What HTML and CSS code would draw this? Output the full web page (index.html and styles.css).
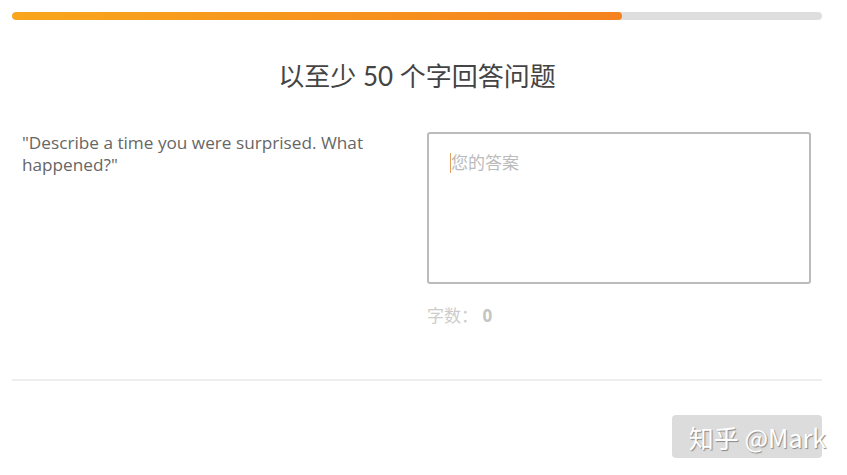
FILE: index.html
```html
<!DOCTYPE html>
<html lang="zh">
<head>
<meta charset="utf-8">
<title>以至少 50 个字回答问题</title>
<link rel="stylesheet" href="styles.css">
</head>
<body>
<div class="page">
  <div class="progress"><div class="progress-fill" style="width: 75.3%"></div></div>
  <h1 class="title">以至少 50 个字回答问题</h1>
  <div class="qa">
    <p class="question">"Describe a time you were surprised. What happened?"</p>
    <div class="answer">
      <div class="textarea"><span class="caret"></span><span class="placeholder">您的答案</span></div>
      <div class="count">字数： <b>0</b></div>
    </div>
  </div>
  <hr class="divider">
  <div class="footer">
    <div class="btn"><span class="watermark">知乎 @Mark</span></div>
  </div>
</div>
</body>
</html>
```

FILE: styles.css
```css
html, body {
  margin: 0;
  padding: 0;
  background: #fff;
}
body {
  font-family: "Open Sans", "Noto Sans CJK SC", sans-serif;
}
.page {
  width: 810px;
  padding: 12px 0 0 12px;
}
.progress {
  height: 8px;
  border-radius: 4px;
  background: #dedede;
  overflow: hidden;
}
.progress-fill {
  height: 100%;
  border-radius: 4px;
  background: linear-gradient(90deg, #f9a61c, #f5821f);
}
.title {
  margin: 39px 0 0;
  height: 34px;
  line-height: 34px;
  text-align: center;
  font-family: Lato, "Noto Sans CJK SC", sans-serif;
  font-size: 26px;
  font-weight: 400;
  color: #444;
}
.qa {
  display: flex;
  margin-top: 39px;
  padding-left: 10px;
}
.question {
  margin: 0;
  width: 370px;
  font-size: 17.2px;
  line-height: 22px;
  color: #666;
}
.answer {
  margin-left: 35px;
  width: 384px;
}
.textarea {
  box-sizing: border-box;
  height: 152px;
  border: 2px solid #bbb;
  border-radius: 3px;
  padding: 18px 0 0 21px;
  font-size: 17px;
  line-height: 22px;
  color: #bbb;
  display: flex;
  align-items: flex-start;
}
.caret {
  width: 1px;
  height: 20px;
  background: #e0a060;
  margin-top: 1px;
}
.count {
  margin-top: 21px;
  font-size: 17px;
  line-height: 22px;
  color: #ccc;
}
.count b {
  font-weight: 700;
  color: #c4c4c4;
}
.divider {
  margin: 52px 0 0;
  border: 0;
  border-top: 2px solid #eee;
}
.footer {
  display: flex;
  justify-content: flex-end;
  margin-top: 34px;
}
.btn {
  width: 150px;
  height: 43px;
  border-radius: 4px;
  background: #dcdcdc;
  display: flex;
  align-items: center;
  justify-content: flex-end;
}
.watermark {
  font-family: "Noto Sans CJK SC", "Liberation Sans", sans-serif;
  font-size: 25px;
  color: #fff;
  text-shadow: 1px 1px 1px #888;
  margin-right: -4px;
  white-space: nowrap;
}
```
